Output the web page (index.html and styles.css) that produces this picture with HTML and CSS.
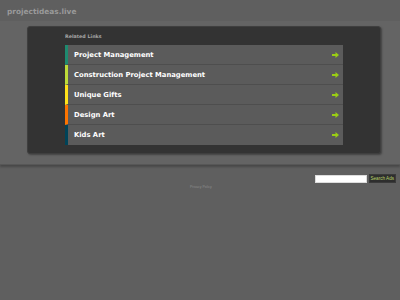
FILE: index.html
```html
<!DOCTYPE html>
<html>
<head>
<meta charset="utf-8">
<link rel="stylesheet" href="styles.css">
</head>
<body>
<div class="header"><span class="domain">projectideas.live</span></div>
<div class="band">
  <div class="box">
    <div class="title">Related Links</div>
    <ul class="links">
      <li class="c1"><span>Project Management</span><svg class="arrow" viewBox="0 0 7 6" width="7" height="6"><path d="M0 2h3.5V0L7 3 3.5 6V4H0z" fill="#9acd14"/></svg></li>
      <li class="c2"><span>Construction Project Management</span><svg class="arrow" viewBox="0 0 7 6" width="7" height="6"><path d="M0 2h3.5V0L7 3 3.5 6V4H0z" fill="#9acd14"/></svg></li>
      <li class="c3"><span>Unique Gifts</span><svg class="arrow" viewBox="0 0 7 6" width="7" height="6"><path d="M0 2h3.5V0L7 3 3.5 6V4H0z" fill="#9acd14"/></svg></li>
      <li class="c4"><span>Design Art</span><svg class="arrow" viewBox="0 0 7 6" width="7" height="6"><path d="M0 2h3.5V0L7 3 3.5 6V4H0z" fill="#9acd14"/></svg></li>
      <li class="c5"><span>Kids Art</span><svg class="arrow" viewBox="0 0 7 6" width="7" height="6"><path d="M0 2h3.5V0L7 3 3.5 6V4H0z" fill="#9acd14"/></svg></li>
    </ul>
  </div>
</div>
<div class="footer">
  <div class="search"><span class="input"></span><span class="btn">Search Ads</span></div>
  <div class="privacy">Privacy Policy</div>
</div>
</body>
</html>
```
FILE: styles.css
```css
html, body { margin: 0; padding: 0; }
body {
  background: #5f5f5f;
  font-family: "DejaVu Sans", Verdana, sans-serif;
  width: 400px;
  height: 300px;
  overflow: hidden;
}
.header {
  height: 21px;
  padding-left: 7px;
  box-sizing: border-box;
  display: flex;
  align-items: center;
  padding-top: 2px;
}
.domain {
  color: #9a9a9a;
  font-weight: bold;
  font-size: 7.4px;
}
.band {
  background: #646464;
  padding: 5px 19px 10px 27px;
  box-shadow: 0 2px 2px rgba(0,0,0,0.25);
  border-bottom: 1px solid #575757;
}
.box {
  background: #333;
  border: 1px solid #3f3f3f;
  border-radius: 3px;
  box-shadow: 1px 1px 2px rgba(0,0,0,0.35);
  padding: 6px 37px 8px 37px;
}
.title {
  color: #a5a5a5;
  font-weight: bold;
  font-size: 4.8px;
  height: 12px;
  line-height: 8px;
}
.links { list-style: none; margin: 0; padding: 0; }
.links li {
  background: #5b5b5b;
  height: 19px;
  border-bottom: 1px solid #4e4e4e;
  border-left: 3px solid #1e8a6f;
  display: flex;
  align-items: center;
  justify-content: space-between;
  padding: 0 4px 0 6px;
  color: #fff;
  font-weight: bold;
  font-size: 6.8px;
}
.links li:last-child { border-bottom: none; height: 20px; }
.links li.c2 { border-left-color: #bedb39; }
.links li.c3 { border-left-color: #ffe11a; }
.links li.c4 { border-left-color: #fd7400; }
.links li.c5 { border-left-color: #004358; }
.arrow { display: block; }
.footer { position: relative; }
.search {
  display: flex;
  justify-content: flex-end;
  align-items: center;
  gap: 2px;
  padding: 9px 4px 0 0;
}
.input {
  width: 50px;
  height: 6px;
  background: #fff;
  border: 1px solid #ddd;
}
.btn {
  background: #2e2e2e;
  color: #b8d36a;
  font-family: "Liberation Sans", Arial, sans-serif;
  font-size: 4.6px;
  padding: 1px 1px;
  border: 1px solid #3a3a3a;
  line-height: 5px;
}
.privacy {
  text-align: left;
  padding-left: 190px;
  color: #8c8c8c;
  font-size: 3.5px;
  font-family: "Liberation Sans", Arial, sans-serif;
  margin-top: 2px;
}
```
